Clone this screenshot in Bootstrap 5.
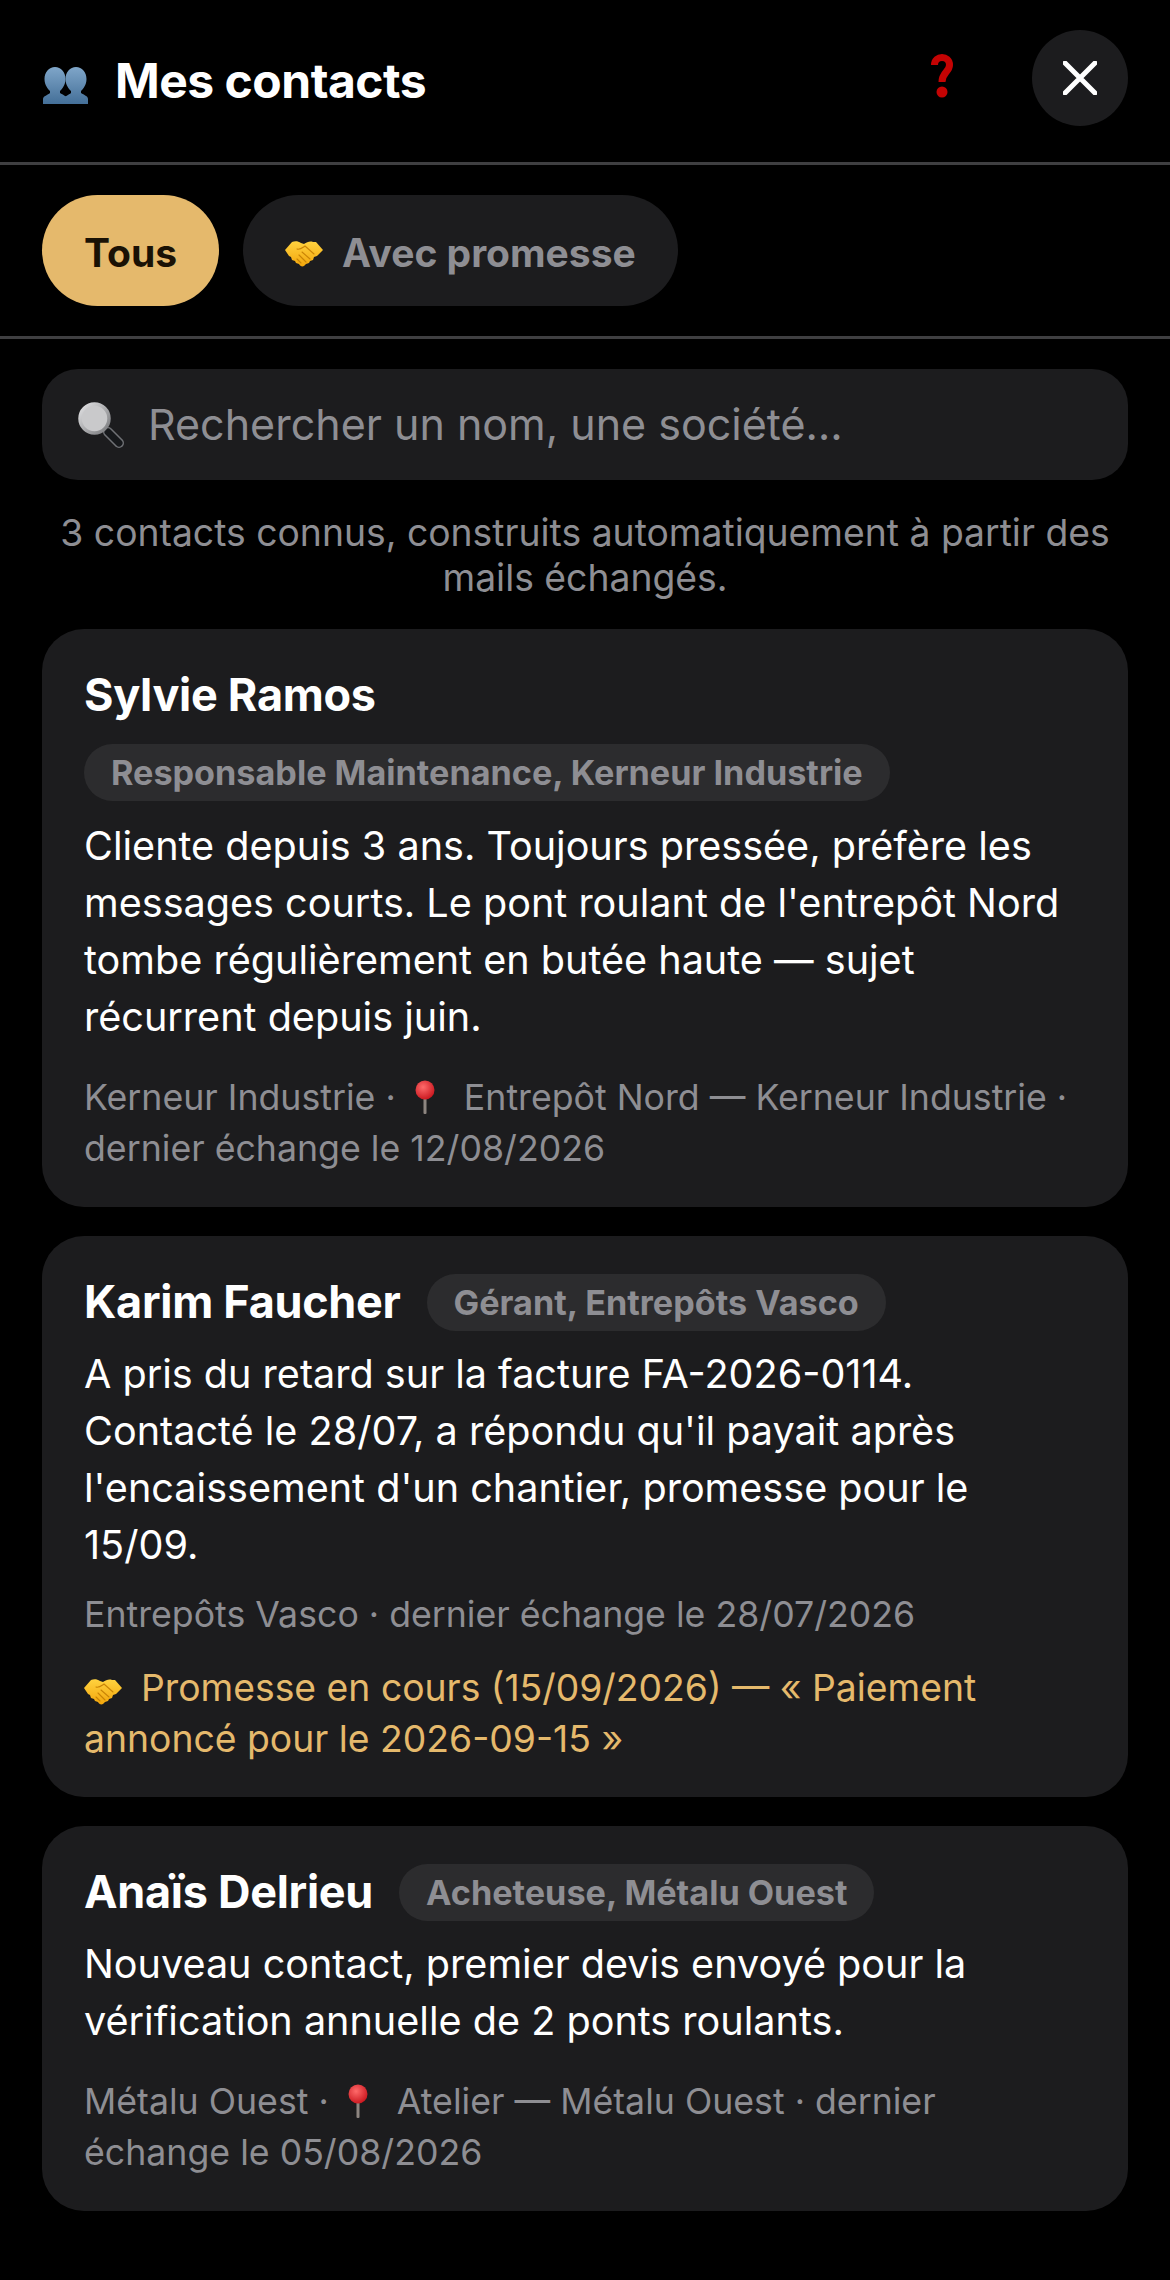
<!DOCTYPE html>
<html lang="fr">
<head>
  <meta charset="UTF-8" />
  <meta name="viewport" content="width=device-width, initial-scale=1" />
  <title>Mes contacts</title>
  <link href="https://cdn.jsdelivr.net/npm/bootstrap@5.3.0/dist/css/bootstrap.min.css" rel="stylesheet" />
  <style>
    /* Page sombre, tailles relevées sur la capture */
    body {
      background: #000;
      color: #fff;
      font-family: Inter, "Liberation Sans", sans-serif;
    }
    .top-bar {
      height: 165px;
      padding: 0 42px;
      border-bottom: 3px solid #3f3f41;
    }
    .top-busts { margin: 8px 27px 0 1px; }
    .top-title {
      font-size: 48px;
      font-weight: 700;
      letter-spacing: -0.5px;
      margin: 0;
    }
    .btn-help {
      width: 60px;
      height: 60px;
      padding: 0;
      margin: 0 60px 10px 0;
      border: 0;
      background: none;
    }
    .btn-round {
      width: 96px;
      height: 96px;
      padding: 0;
      margin-bottom: 6px;
      border: 0;
      background: #1c1c1e;
    }
    .filter-bar {
      height: 174px;
      padding: 0 42px;
      gap: 24px;
      border-bottom: 3px solid #3f3f41;
    }
    .chip {
      height: 111px;
      padding: 6px 42px 0;
      border: 0;
      font-size: 39px;
      font-weight: 700;
      color: #8e8e93;
      background: #1c1c1e;
      gap: 19px;
    }
    .chip:hover { color: #8e8e93; background: #1c1c1e; }
    .chip-on, .chip-on:hover {
      background: #e5b96c;
      color: #1a1205;
    }
    .page-body { padding: 30px 42px 0; }
    .search-box {
      height: 111px;
      padding: 0 36px;
      gap: 24px;
      background: #1c1c1e;
      border-radius: 36px;
    }
    .search-box .form-control {
      background: transparent;
      border: 0;
      padding: 0;
      color: #fff;
      font-size: 43px;
      box-shadow: none;
    }
    .search-box .form-control::placeholder { color: #8e8e93; opacity: 1; }
    .intro {
      margin: 30px 0 29px;
      font-size: 37.300px;
      line-height: 45px;
      color: #8e8e93;
      text-align: center;
    }
    .contact-card {
      background: #1c1c1e;
      border: 0;
      border-radius: 42px;
      padding: 36px 42px 33px;
      margin-bottom: 29px;
      color: #fff;
    }
    .contact-name {
      font-size: 45px;
      font-weight: 700;
      letter-spacing: -0.3px;
      line-height: 60px;
      margin: 0;
    }
    .contact-head { column-gap: 26px; row-gap: 19px; }
    /* le badge passé à la ligne laisse un peu plus d'air dessous */
    .head-wrapped { margin-bottom: 3px; }
    .contact-role {
      background: #2c2c2e;
      color: #8e8e93;
      font-size: 34.200px;
      font-weight: 700;
      line-height: 57px;
      padding: 0 27px;
      border-radius: 29px;
    }
    .contact-note {
      font-size: 39.600px;
      line-height: 57px;
      margin: 14px 0 0;
    }
    .contact-meta {
      font-size: 35.700px;
      line-height: 51px;
      color: #8e8e93;
      margin: 15px 0 0;
    }
    /* la ligne avec l'épingle est un peu plus haute sur la capture */
    .meta-pin { margin-top: 26px; }
    .contact-promise {
      font-size: 37.300px;
      line-height: 51px;
      color: #e5b96c;
      margin: 22px 0 0;
    }
    .ico { display: inline-block; vertical-align: -0.12em; }
    .ico-pin { margin: 0 9px 0 9px; }
    .ico-shake { margin-right: -2px; }
  </style>
</head>
<body>
  <!-- Formes réutilisées : pas de police emoji sur la machine -->
  <svg width="0" height="0" class="position-absolute">
    <defs>
      <linearGradient id="shakeFill" x1="0" y1="0" x2="0" y2="1">
        <stop offset="0" stop-color="#ffd23f" />
        <stop offset="1" stop-color="#f2a60c" />
      </linearGradient>
      <radialGradient id="pinFill" cx="0.4" cy="0.35" r="0.7">
        <stop offset="0" stop-color="#ff6a6a" />
        <stop offset="1" stop-color="#c8141c" />
      </radialGradient>
      <linearGradient id="bustFill" x1="0" y1="0" x2="0" y2="1">
        <stop offset="0" stop-color="#7fa6c9" />
        <stop offset="1" stop-color="#446f98" />
      </linearGradient>
      <linearGradient id="ringFill" x1="0" y1="0" x2="1" y2="1">
        <stop offset="0" stop-color="#e4e4e6" />
        <stop offset="1" stop-color="#77787b" />
      </linearGradient>
    </defs>
    <symbol id="shake" viewBox="0 0 38 26">
      <path fill="url(#shakeFill)" d="M0 9 7 1c3-1 6-1 9 1l3 1c3-2 6-3 9-2h3l7 8-6 6-3 1-1 3-3 1-1 2-3 1-2 2c-2 1-4 0-5-2l-3-1-1-2-3-1-1-3-2-1z" />
      <path fill="none" stroke="#c98406" stroke-width="1.100" stroke-linecap="round" d="M12 8c3 1 5-1 8-3l9 8M17 11l8 7M14 14l7 7M12 18l4 4" />
    </symbol>
    <symbol id="pin" viewBox="0 0 20 34">
      <rect x="8.500" y="14" width="3" height="20" rx="1" fill="#8d8580" />
      <circle cx="10" cy="10" r="9.500" fill="url(#pinFill)" />
    </symbol>
    <symbol id="bust" viewBox="0 0 24 37">
      <path fill="url(#bustFill)" d="M12 0C18 0 22.500 5 22.500 12 22.500 18 19 22 17 24V26C20 28 24 29 24 32V37H0V32C0 29 5 28 7 26V24C5 22 1.500 18 1.500 12 1.500 5 6 0 12 0z" />
    </symbol>
  </svg>

  <!-- Barre du haut -->
  <header class="top-bar d-flex align-items-center">
    <svg class="top-busts flex-shrink-0" width="45" height="37" viewBox="0 0 45 37" aria-hidden="true">
      <use href="#bust" width="24" height="37" />
      <use href="#bust" x="21" width="24" height="37" />
    </svg>
    <h1 class="top-title flex-grow-1">Mes contacts</h1>
    <button class="btn btn-help d-flex align-items-center justify-content-center" type="button" aria-label="Aide">
      <svg width="22" height="44" viewBox="0 0 22 44">
        <path fill="none" stroke="#c40303" stroke-width="7" d="M3.500 11C3.500 1 18.500 1 18.500 11c0 7-7.500 7-7.500 17" />
        <circle cx="11" cy="38" r="5.500" fill="#c40303" />
      </svg>
    </button>
    <button class="btn btn-round rounded-circle d-flex align-items-center justify-content-center" type="button" aria-label="Fermer">
      <svg width="34" height="34" viewBox="0 0 34 34">
        <path stroke="#fff" stroke-width="5" stroke-linecap="round" d="M2 2 32 32M32 2 2 32" />
      </svg>
    </button>
  </header>

  <!-- Filtres -->
  <nav class="filter-bar d-flex align-items-center">
    <button class="btn chip chip-on rounded-pill" type="button">Tous</button>
    <button class="btn chip rounded-pill d-flex align-items-center" type="button">
      <svg width="38" height="26" aria-hidden="true"><use href="#shake" /></svg>
      Avec promesse
    </button>
  </nav>

  <main class="page-body">
    <div class="search-box d-flex align-items-center">
      <svg class="flex-shrink-0" width="46" height="46" viewBox="0 0 46 46" aria-hidden="true">
        <path stroke="#6f7175" stroke-width="10" stroke-linecap="round" d="M30 30 41 41" />
        <path stroke="#16181b" stroke-width="7" stroke-linecap="round" d="M30 30 41 41" />
        <circle cx="16.500" cy="16.500" r="14.500" fill="#c9c9cb" stroke="url(#ringFill)" stroke-width="3.500" />
      </svg>
      <input class="form-control" type="text" placeholder="Rechercher un nom, une société…" />
    </div>

    <p class="intro">3 contacts connus, construits automatiquement à partir des mails échangés.</p>

    <!-- Liste des contacts -->
    <article class="card contact-card">
      <div class="contact-head head-wrapped d-flex flex-wrap align-items-center">
        <h2 class="contact-name">Sylvie Ramos</h2>
        <span class="contact-role">Responsable Maintenance, Kerneur Industrie</span>
      </div>
      <p class="contact-note">Cliente depuis 3 ans. Toujours pressée, préfère les messages courts. Le pont roulant de l'entrepôt Nord tombe régulièrement en butée haute — sujet récurrent depuis juin.</p>
      <p class="contact-meta meta-pin">Kerneur Industrie · <svg class="ico ico-pin" width="20" height="34"><use href="#pin" /></svg>&nbsp; Entrepôt Nord — Kerneur Industrie · dernier échange le 12/08/2026</p>
    </article>

    <article class="card contact-card">
      <div class="contact-head d-flex flex-wrap align-items-center">
        <h2 class="contact-name">Karim Faucher</h2>
        <span class="contact-role">Gérant, Entrepôts Vasco</span>
      </div>
      <p class="contact-note">A pris du retard sur la facture FA-2026-0114. Contacté le 28/07, a répondu qu'il payait après l'encaissement d'un chantier, promesse pour le 15/09.</p>
      <p class="contact-meta">Entrepôts Vasco · dernier échange le 28/07/2026</p>
      <p class="contact-promise"><svg class="ico ico-shake" width="38" height="26"><use href="#shake" /></svg>&nbsp; Promesse en cours (15/09/2026) — « Paiement annoncé pour le 2026-09-15 »</p>
    </article>

    <article class="card contact-card">
      <div class="contact-head d-flex flex-wrap align-items-center">
        <h2 class="contact-name">Anaïs Delrieu</h2>
        <span class="contact-role">Acheteuse, Métalu Ouest</span>
      </div>
      <p class="contact-note">Nouveau contact, premier devis envoyé pour la vérification annuelle de 2 ponts roulants.</p>
      <p class="contact-meta meta-pin">Métalu Ouest · <svg class="ico ico-pin" width="20" height="34"><use href="#pin" /></svg>&nbsp; Atelier — Métalu Ouest · dernier échange le 05/08/2026</p>
    </article>
  </main>

  <script src="https://cdn.jsdelivr.net/npm/bootstrap@5.3.0/dist/js/bootstrap.bundle.min.js"></script>
</body>
</html>
